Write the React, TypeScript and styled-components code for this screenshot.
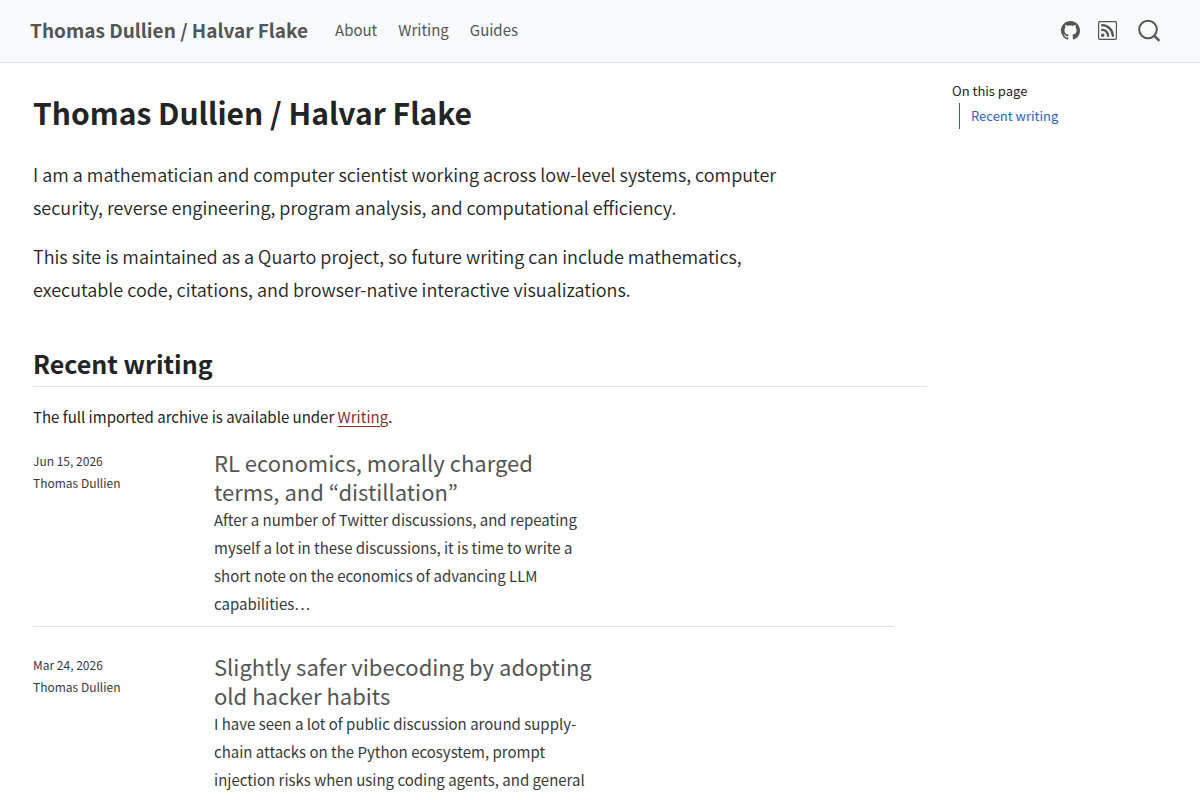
import React from 'react';
import styled, { createGlobalStyle, css } from 'styled-components';

const Global = createGlobalStyle`
  *, *::before, *::after { box-sizing: border-box; }
  body {
    margin: 0;
    background: #fff;
    color: #222426;
    font-family: "Noto Sans CJK KR", "Noto Sans", sans-serif;
    font-size: 15px;
    line-height: 28px;
  }
  h1, h2, h3, p { margin: 0; }
`;

const Navbar = styled.header`
  display: flex;
  align-items: center;
  padding: 16px 39px 18px 30px;
  background: #f8fafc;
  border-bottom: 1px solid #dee2e6;
`;

const Brand = styled.a`
  margin-right: 27px;
  color: #545555;
  font-size: 19px;
  font-weight: 700;
  text-decoration: none;
`;

const NavLinks = styled.nav`
  display: flex;
  gap: 21px;
  flex: 1;
`;

const NavLink = styled.a`
  color: #545555;
  text-decoration: none;
`;

const Tools = styled.div`
  display: flex;
  align-items: center;
  gap: 18px;
`;

const iconStyle = css`
  display: flex;
  padding: 0;
  border: 0;
  background: none;
  color: #545555;
`;
const ToolLink = styled.a`
  ${iconStyle}
`;
const SearchButton = styled.button`
  ${iconStyle}
  margin-left: 3px;
`;

const Page = styled.div`
  display: grid;
  grid-template-columns: minmax(0, 1fr) 223px;
  column-gap: 25px;
  padding: 0 25px 0 33px;
`;

const Main = styled.main`
  min-width: 0;
`;

const Title = styled.h1`
  margin: 28px 0 25px;
  font-size: 30px;
  line-height: 42px;
`;

const Lead = styled.p`
  max-width: 752px;
  margin-bottom: 16px;
  font-size: 18px;
  font-weight: 350;
  line-height: 33px;
`;

const Section = styled.h2`
  margin: 39px 0 16px;
  padding-bottom: 5px;
  border-bottom: 1px solid #dee2e6;
  font-size: 25px;
  line-height: 36px;
`;

const TextLink = styled.a`
  color: #8f3028;
  text-decoration: underline;
  text-underline-offset: 3px;
`;

const Post = styled.article`
  display: grid;
  grid-template-columns: 151px 380px;
  column-gap: 30px;
  margin: 17px 33px 25px 0;
  padding-bottom: 8px;
  border-bottom: 1px solid #dee2e6;

  &:last-child {
    margin-bottom: 0;
    padding-bottom: 0;
    border-bottom: 0;
  }
`;

const Meta = styled.div`
  padding-top: 2px;
  color: #373a3c;
  font-size: 12px;
  line-height: 22px;
`;

const PostTitle = styled.h3`
  font-size: 22px;
  font-weight: 400;
  line-height: 29px;
`;

const PostLink = styled.a`
  color: #545555;
  text-decoration: none;
`;

const Excerpt = styled.p`
  color: #373a3c;
`;

const Toc = styled.nav`
  padding-top: 15px;
  font-size: 13px;
`;

const TocTitle = styled.h2`
  font-size: 13px;
  font-weight: 400;
  line-height: 25px;
`;

const TocLink = styled.a`
  display: block;
  margin-left: 7px;
  padding-left: 11px;
  border-left: 1px solid #2761b8;
  color: #2d62c9;
  line-height: 26px;
  text-decoration: none;
`;

const GithubIcon = () => (
  <svg width="19" height="19" viewBox="0 0 16 16" fill="currentColor" aria-hidden="true">
    <path d="M8 0C3.58 0 0 3.58 0 8c0 3.54 2.29 6.53 5.47 7.59.4.07.55-.17.55-.38 0-.19-.01-.82-.01-1.49-2.01.37-2.53-.49-2.69-.94-.09-.23-.48-.94-.82-1.13-.28-.15-.68-.52-.01-.53.63-.01 1.08.58 1.23.82.72 1.21 1.87.87 2.33.66.07-.52.28-.87.51-1.07-1.78-.2-3.64-.89-3.64-3.95 0-.87.31-1.59.82-2.15-.08-.2-.36-1.02.08-2.12 0 0 .67-.21 2.2.82.64-.18 1.32-.27 2-.27s1.36.09 2 .27c1.53-1.04 2.2-.82 2.2-.82.44 1.1.16 1.92.08 2.12.51.56.82 1.27.82 2.15 0 3.07-1.87 3.75-3.65 3.95.29.25.54.73.54 1.48 0 1.07-.01 1.93-.01 2.2 0 .21.15.46.55.38A8.01 8.01 0 0 0 16 8c0-4.42-3.58-8-8-8" />
  </svg>
);

const RssIcon = () => (
  <svg width="19" height="19" viewBox="0 0 16 16" fill="currentColor" aria-hidden="true">
    <path d="M14 1a1 1 0 0 1 1 1v12a1 1 0 0 1-1 1H2a1 1 0 0 1-1-1V2a1 1 0 0 1 1-1zM1.4 0A1.4 1.4 0 0 0 0 1.4v13.2A1.4 1.4 0 0 0 1.4 16h13.2a1.4 1.4 0 0 0 1.4-1.4V1.4A1.4 1.4 0 0 0 14.6 0z" />
    <path d="M5.5 12a1.5 1.5 0 1 1-3 0 1.5 1.5 0 0 1 3 0m-3-8.5a1 1 0 0 1 1-1c5.523 0 10 4.477 10 10a1 1 0 1 1-2 0 8 8 0 0 0-8-8 1 1 0 0 1-1-1m0 4a1 1 0 0 1 1-1 6 6 0 0 1 6 6 1 1 0 1 1-2 0 4 4 0 0 0-4-4 1 1 0 0 1-1-1" />
  </svg>
);

const SearchIcon = () => (
  <svg width="23" height="23" viewBox="0 0 23 23" fill="none" stroke="currentColor" aria-hidden="true">
    <circle cx="10" cy="10.5" r="8.8" strokeWidth="2" />
    <path d="M16.4 16.9l5 5" strokeWidth="2.4" />
  </svg>
);

const posts = [
  {
    date: 'Jun 15, 2026',
    title: 'RL economics, morally charged terms, and “distillation”',
    excerpt:
      'After a number of Twitter discussions, and repeating myself a lot in these discussions, it is time to write a short note on the economics of advancing LLM capabilities…',
  },
  {
    date: 'Mar 24, 2026',
    title: 'Slightly safer vibecoding by adopting old hacker habits',
    excerpt:
      'I have seen a lot of public discussion around supply-chain attacks on the Python ecosystem, prompt injection risks when using coding agents, and general',
  },
];

export default function App() {
  return (
    <>
      <Global />
      <Navbar>
        <Brand href="#">Thomas Dullien / Halvar Flake</Brand>
        <NavLinks>
          <NavLink href="#about">About</NavLink>
          <NavLink href="#writing">Writing</NavLink>
          <NavLink href="#guides">Guides</NavLink>
        </NavLinks>
        <Tools>
          <ToolLink href="#github" aria-label="GitHub"><GithubIcon /></ToolLink>
          <ToolLink href="#rss" aria-label="RSS"><RssIcon /></ToolLink>
          <SearchButton type="button" aria-label="Search"><SearchIcon /></SearchButton>
        </Tools>
      </Navbar>
      <Page>
        <Main>
          <Title>Thomas Dullien / Halvar Flake</Title>
          <Lead>
            I am a mathematician and computer scientist working across low-level systems, computer
            security, reverse engineering, program analysis, and computational efficiency.
          </Lead>
          <Lead>
            This site is maintained as a Quarto project, so future writing can include mathematics,
            executable code, citations, and browser-native interactive visualizations.
          </Lead>
          <Section id="recent">Recent writing</Section>
          <p>
            The full imported archive is available under <TextLink href="#writing">Writing</TextLink>.
          </p>
          {posts.map((post) => (
            <Post key={post.date}>
              <Meta>
                <div>{post.date}</div>
                <div>Thomas Dullien</div>
              </Meta>
              <div>
                <PostTitle><PostLink href="#post">{post.title}</PostLink></PostTitle>
                <Excerpt>{post.excerpt}</Excerpt>
              </div>
            </Post>
          ))}
        </Main>
        <Toc aria-label="On this page">
          <TocTitle>On this page</TocTitle>
          <TocLink href="#recent">Recent writing</TocLink>
        </Toc>
      </Page>
    </>
  );
}
